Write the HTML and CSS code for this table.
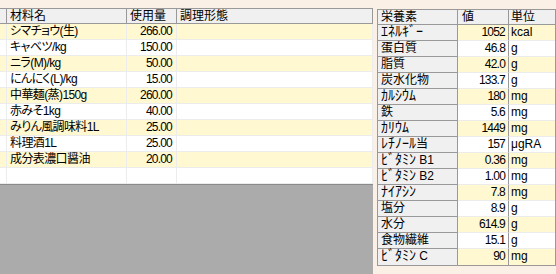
FILE: index.html
```html
<!DOCTYPE html>
<html lang="ja">
<head>
<meta charset="utf-8">
<link rel="stylesheet" href="styles.css">
</head>
<body>
<div class="page">
  <div class="materials">
    <div class="lrow lhead">
      <div class="cell"></div><div class="cell txt">材料名</div><div class="cell txt">使用量</div><div class="cell txt">調理形態</div>
    </div>
    <div class="lrow odd"><div class="cell"></div><div class="cell txt">シマチョウ(生)</div><div class="cell num">266.00</div><div class="cell"></div></div>
    <div class="lrow"><div class="cell"></div><div class="cell txt">キャベツ/kg</div><div class="cell num">150.00</div><div class="cell"></div></div>
    <div class="lrow odd"><div class="cell"></div><div class="cell txt">ニラ(M)/kg</div><div class="cell num">50.00</div><div class="cell"></div></div>
    <div class="lrow"><div class="cell"></div><div class="cell txt">にんにく(L)/kg</div><div class="cell num">15.00</div><div class="cell"></div></div>
    <div class="lrow odd"><div class="cell"></div><div class="cell txt">中華麺(蒸)150g</div><div class="cell num">260.00</div><div class="cell"></div></div>
    <div class="lrow"><div class="cell"></div><div class="cell txt">赤みそ1kg</div><div class="cell num">40.00</div><div class="cell"></div></div>
    <div class="lrow odd"><div class="cell"></div><div class="cell txt">みりん風調味料1L</div><div class="cell num">25.00</div><div class="cell"></div></div>
    <div class="lrow"><div class="cell"></div><div class="cell txt">料理酒1L</div><div class="cell num">25.00</div><div class="cell"></div></div>
    <div class="lrow odd"><div class="cell"></div><div class="cell txt">成分表濃口醤油</div><div class="cell num">20.00</div><div class="cell"></div></div>
    <div class="lrow"><div class="cell"></div><div class="cell"></div><div class="cell"></div><div class="cell"></div></div>
    <div class="lend"></div>
  </div>
  <div class="nutrients">
    <div class="nrow nhead"><div class="name">栄養素</div><div class="val left">値</div><div class="unit">単位</div></div>
    <div class="nrow odd"><div class="name"><span class="hk">ｴﾈﾙｷﾞｰ</span></div><div class="val">1052</div><div class="unit">kcal</div></div>
    <div class="nrow"><div class="name">蛋白質</div><div class="val">46.8</div><div class="unit">g</div></div>
    <div class="nrow odd"><div class="name">脂質</div><div class="val">42.0</div><div class="unit">g</div></div>
    <div class="nrow"><div class="name">炭水化物</div><div class="val">133.7</div><div class="unit">g</div></div>
    <div class="nrow odd"><div class="name"><span class="hk">ｶﾙｼｳﾑ</span></div><div class="val">180</div><div class="unit">mg</div></div>
    <div class="nrow"><div class="name">鉄</div><div class="val">5.6</div><div class="unit">mg</div></div>
    <div class="nrow odd"><div class="name"><span class="hk">ｶﾘｳﾑ</span></div><div class="val">1449</div><div class="unit">mg</div></div>
    <div class="nrow"><div class="name"><span class="hk">ﾚﾁﾉｰﾙ</span>当</div><div class="val">157</div><div class="unit">μgRA</div></div>
    <div class="nrow odd"><div class="name"><span class="hk">ﾋﾞﾀﾐﾝ</span> B1</div><div class="val">0.36</div><div class="unit">mg</div></div>
    <div class="nrow"><div class="name"><span class="hk">ﾋﾞﾀﾐﾝ</span> B2</div><div class="val">1.00</div><div class="unit">mg</div></div>
    <div class="nrow odd"><div class="name"><span class="hk">ﾅｲｱｼﾝ</span></div><div class="val">7.8</div><div class="unit">mg</div></div>
    <div class="nrow"><div class="name">塩分</div><div class="val">8.9</div><div class="unit">g</div></div>
    <div class="nrow odd"><div class="name">水分</div><div class="val">614.9</div><div class="unit">g</div></div>
    <div class="nrow"><div class="name">食物繊維</div><div class="val">15.1</div><div class="unit">g</div></div>
    <div class="nrow odd last"><div class="name"><span class="hk">ﾋﾞﾀﾐﾝ</span> C</div><div class="val">90</div><div class="unit">mg</div></div>
  </div>
</div>
</body>
</html>
```

FILE: styles.css
```css
* { box-sizing: border-box; }
html, body {
  margin: 0;
  padding: 0;
  background: #faf0e6;
  width: 556px;
  height: 274px;
  overflow: hidden;
}
body {
  font-family: "Liberation Sans", "Noto Sans CJK JP", sans-serif;
  font-size: 12px;
  color: #000;
}
.page {
  display: flex;
  align-items: flex-start;
  gap: 4px;
}
.materials {
  margin-top: 8px;
  width: 373px;
  height: 266px;
  background: #ababab;
  display: flex;
  flex-direction: column;
  font-feature-settings: "palt";
}
.lrow {
  display: grid;
  grid-template-columns: 7px 120px 50px 196px;
  height: 16px;
  background: #fff;
  border-bottom: 1px solid #ececec;
}
.lrow.odd { background: #fff8d0; }
.lrow .cell {
  border-right: 1px solid #ececec;
  line-height: 15px;
  white-space: nowrap;
}
.lrow .txt {
  padding-left: 3px;
  letter-spacing: -0.6px;
}
.lrow .num {
  text-align: right;
  padding-right: 4px;
  letter-spacing: -0.8px;
}
.lrow.lhead {
  background: #f0f0f0;
  border-top: 1px solid #999;
  border-bottom: 1px solid #999;
}
.lrow.lhead .cell {
  border-right-color: #999;
  line-height: 14px;
  letter-spacing: 0;
}
.lend {
  border-top: 1px solid #8a8a8a;
}
.nutrients {
  margin-top: 9px;
  width: 179px;
  height: 257px;
  border: 1px solid #999;
  background: #fff;
}
.nrow {
  display: grid;
  grid-template-columns: 80px 51px 46px;
  height: 16px;
}
.nrow > div {
  line-height: 15px;
  white-space: nowrap;
  border-bottom: 1px solid #ececec;
}
.nrow .name {
  background: #f0f0f0;
  border-right: 1px solid #999;
  border-bottom-color: #999;
  padding-left: 3px;
}
.nrow .hk {
  font-size: 14px;
  line-height: 0;
}
.nrow .val {
  border-right: 1px solid #999;
  text-align: right;
  padding-right: 3px;
  letter-spacing: -0.8px;
}
.nrow .val.left {
  text-align: left;
  padding-left: 4px;
  letter-spacing: 0;
}
.nrow .unit { padding-left: 2px; }
.nrow.odd .val, .nrow.odd .unit { background: #fff8d0; }
.nrow.nhead { height: 15px; }
.nrow.nhead > div {
  background: #f0f0f0;
  border-bottom-color: #999;
  line-height: 14px;
}
.nrow.last > div { border-bottom: 0; }
```
